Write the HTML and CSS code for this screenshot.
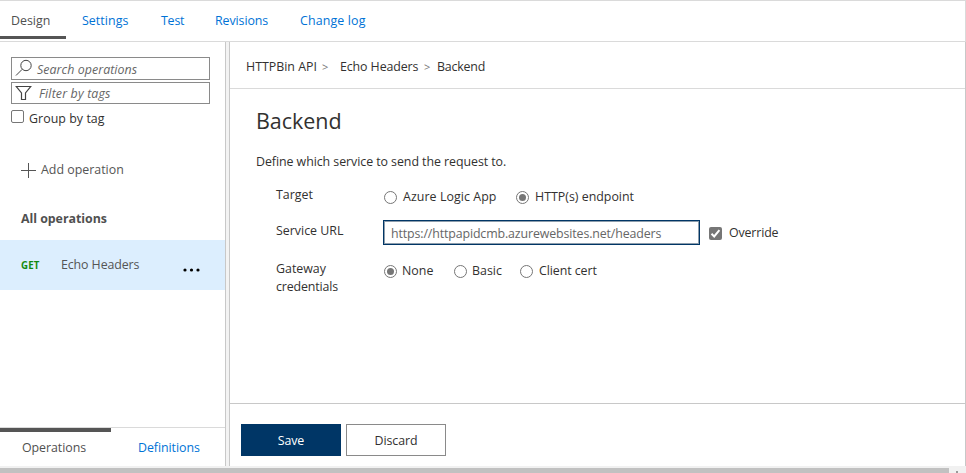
FILE: index.html
```html
<!DOCTYPE html>
<html lang="en">
<head>
<meta charset="utf-8">
<title>Backend</title>
<link rel="stylesheet" href="styles.css">
</head>
<body>
<div class="app">
  <nav class="tabs">
    <a class="tab active">Design</a><a class="tab settings">Settings</a><a class="tab test">Test</a><a class="tab revisions">Revisions</a><a class="tab changelog">Change log</a>
  </nav>
  <div class="body">
    <aside class="sidebar">
      <div class="search field">
        <svg width="18" height="18" viewBox="0 0 18 18" fill="none" stroke="#444"><circle cx="11" cy="6.5" r="5.2"/><path d="M7.2 10.3 1 16.5"/></svg>
        <span>Search operations</span>
      </div>
      <div class="filter field">
        <svg width="18" height="18" viewBox="0 0 18 18" fill="none" stroke="#444" stroke-width="1.2"><path d="M1.3 2.5h14.4L10.5 9v6.5h-4V9z"/></svg>
        <span>Filter by tags</span>
      </div>
      <div class="group"><i class="check"></i><span>Group by tag</span></div>
      <div class="add"><svg width="15" height="15" viewBox="0 0 15 15" stroke="#555"><path d="M0 7.5h15M7.5 0v15"/></svg><span>Add operation</span></div>
      <div class="heading"><span>All operations</span></div>
      <div class="operation"><b>GET</b><span>Echo Headers</span>
        <svg width="18" height="4" viewBox="0 0 18 4"><circle cx="2" cy="2" r="1.6"/><circle cx="8.5" cy="2" r="1.6"/><circle cx="15" cy="2" r="1.6"/></svg>
      </div>
      <div class="views"><div class="view current"><span>Operations</span></div><div class="view"><span>Definitions</span></div></div>
    </aside>
    <div class="splitter"></div>
    <main class="main">
      <div class="crumbs"><span class="c-api">HTTPBin API</span><span class="sep s1">&gt;</span><span class="c-op">Echo Headers</span><span class="sep s2">&gt;</span><span class="c-back">Backend</span></div>
      <section class="content">
        <h1><span>Backend</span></h1>
        <p><span>Define which service to send the request to.</span></p>
        <div class="row target">
          <div class="label"><span>Target</span></div>
          <i class="radio"></i><span class="o-logic">Azure Logic App</span>
          <i class="radio on"></i><span class="o-http">HTTP(s) endpoint</span>
        </div>
        <div class="row url">
          <div class="label"><span class="l-url">Service URL</span></div>
          <div class="input"><span>https://httpapidcmb.azurewebsites.net/headers</span></div>
          <i class="check checked"><svg width="13" height="13" viewBox="0 0 13 13" fill="none" stroke="#fff" stroke-width="2"><path d="m2.5 6.8 2.7 2.7 5.2-6.3"/></svg></i><span class="o-over">Override</span>
        </div>
        <div class="row creds">
          <div class="label"><span class="l-gate">Gateway</span><br><span class="l-cred">credentials</span></div>
          <i class="radio on"></i><span class="o-none">None</span>
          <i class="radio"></i><span class="o-basic">Basic</span>
          <i class="radio"></i><span class="o-cert">Client cert</span>
        </div>
      </section>
      <footer class="footer"><div class="btn save"><span>Save</span></div><div class="btn"><span>Discard</span></div></footer>
    </main>
  </div>
  <div class="scroll"><div class="thumb"></div><div class="arrow"></div></div>
</div>
</body>
</html>
```
FILE: styles.css
```css
* { box-sizing: border-box; }
body { margin: 0; background: #fff; }
.app { width: 966px; height: 473px; overflow: hidden; display: flex; flex-direction: column; font: 12.4px/18px "Open Sans", "Noto Sans", sans-serif; color: #323130; white-space: nowrap; }
.tabs { display: flex; flex: 0 0 42px; border: solid #dadada; border-width: 1px 1px 1px 0; }
.tab { color: #0072d6; padding: 11px 0 0; height: 38px; }
.tab.active { width: 66px; padding-left: 11px; color: #505050; border-bottom: 3px solid #555; }
.settings { width: 78px; padding-left: 16px; letter-spacing: .06px; }
.test { width: 55px; padding-left: 17px; letter-spacing: -.2px; }
.revisions { width: 85px; padding-left: 16px; letter-spacing: -.08px; }
.changelog { padding-left: 16px; letter-spacing: .15px; }
.body { display: flex; height: 424px; }
.sidebar { width: 225px; padding-top: 15px; display: flex; flex-direction: column; }
.field { display: flex; width: 199px; margin-left: 11px; border: 1px solid #8a8a8a; font-style: italic; color: #666; }
.search { height: 23px; letter-spacing: .06px; }
.filter { height: 22px; margin-top: 2px; letter-spacing: .15px; }
.field svg { margin: 1px 0 0 3px; }
.search span { margin: 3px 0 0 4px; }
.filter span { margin: 2px 0 0 6px; }
.group { display: flex; margin: 6px 0 0 11px; height: 18px; }
.group span { margin-left: 5px; letter-spacing: .05px; }
.check { width: 13px; height: 13px; border: 1px solid #767676; border-radius: 2px; flex: none; }
.checked { background: #767676; border: 0; }
.check svg { display: block; }
.add { display: flex; margin: 33px 0 0 21px; height: 18px; color: #555; }
.add svg { margin-top: 2px; }
.add span { margin-left: 5px; }
.heading { margin: 31px 0 0 21px; font-weight: 700; color: #505050; height: 18px; letter-spacing: -.04px; }
.operation { margin-top: 12px; height: 50px; flex: none; display: flex; align-items: center; background: #dceefe; padding-left: 21px; color: #555; }
.operation b { width: 40px; font-size: 9.7px; color: #108a10; padding-top: 1px; letter-spacing: .2px; }
.operation span { width: 122px; letter-spacing: -.1px; }
.operation svg { margin-top: 9px; }
.views { display: flex; margin-top: auto; height: 39px; border-top: 1px solid #dadada; }
.view { width: 111px; padding: 11px 0 0 27px; color: #0072d6; letter-spacing: -.06px; }
.view.current { border-top: 4px solid #555; padding: 7px 0 0 22px; color: #505050; }
.splitter { width: 5px; background: #f3f3f3; border: solid #c8c8c8; border-width: 0 1px; }
.main { width: 736px; border-right: 1px solid #c8c8c8; display: flex; flex-direction: column; }
.crumbs { height: 47px; padding: 16px 0 0 16px; display: flex; border-bottom: 1px solid #dadada; }
.c-api { width: 76px; }
.sep { color: #777; font-size: 11px; }
.s1 { width: 18px; }
.c-op { width: 84px; letter-spacing: -.1px; }
.s2 { width: 13px; }
.c-back { letter-spacing: -.2px; }
.content { flex: 1; padding-left: 26px; }
h1 { font-size: 21.5px; font-weight: 400; line-height: 28px; margin: 18px 0 0; letter-spacing: -.05px; }
p { margin: 18px 0 0; letter-spacing: -.06px; }
.row { display: flex; margin-left: 20px; }
.label { width: 108px; }
.target { margin-top: 17px; }
.target .label { margin-top: -2px; }
.radio { width: 13px; height: 13px; border: 1px solid #767676; border-radius: 50%; padding: 2px; flex: none; margin-top: 3px; }
.radio.on::before { content: ""; display: block; width: 7px; height: 7px; border-radius: 50%; background: #767676; }
.row > span { margin-left: 5px; }
.row > .o-logic { width: 113px; margin-left: 6px; letter-spacing: .07px; }
.row > .o-http { margin-left: 6px; }
.url { margin-top: 14px; height: 25px; }
.url .label { width: 107px; margin-top: 2px; }
.input { width: 317px; height: 25px; border: 1px solid #003666; outline: 1px solid #8d9dac; outline-offset: -2px; padding: 4px 0 0 7px; color: #666; letter-spacing: -.13px; }
.url .check { margin: 7px 2px 0 9px; }
.o-over { margin-top: 4px; letter-spacing: -.15px; }
.creds { margin-top: 17px; }
.creds .label { margin-top: -2px; }
.l-cred { letter-spacing: -.15px; }
.o-none { width: 52px; }
.o-basic { width: 48px; }
.row > .o-cert { margin-left: 6px; letter-spacing: -.08px; }
.footer { border-top: 1px solid #c8c8c8; height: 63px; padding: 20px 0 0 11px; display: flex; gap: 5px; }
.btn { width: 100px; height: 32px; border: 1px solid #8a8a8a; line-height: 32px; text-align: center; letter-spacing: -.1px; }
.save { background: #003666; border-color: #003666; color: #fff; font-weight: 500; letter-spacing: -.1px; }
.scroll { height: 7px; background: #f1f1f1; display: flex; padding-top: 2px; }
.thumb { width: 949px; background: #c1c1c1; }
.arrow { margin: 3px 0 0 7px; width: 2px; height: 2px; background: #999; }
```
